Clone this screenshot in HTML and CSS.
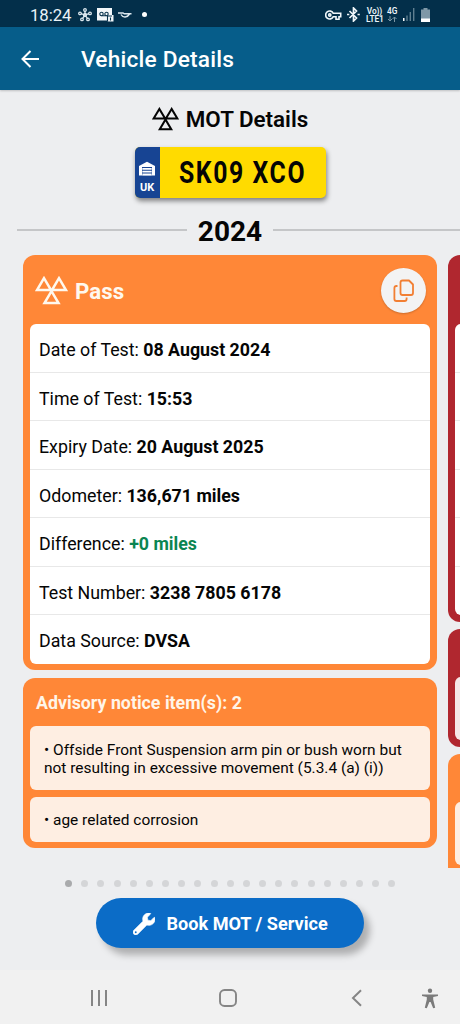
FILE: index.html
```html
<!DOCTYPE html>
<html lang="en">
<head>
<meta charset="utf-8">
<title>Vehicle Details</title>
<link rel="stylesheet" href="styles.css">
</head>
<body>
<svg width="0" height="0" class="defs">
  <symbol id="mot" viewBox="0 0 33 29"><path d="M9 2.200 2 14h14zM24 2.200 17 14h14zM16.500 15.200 9.500 27h14z" fill="none" stroke="currentColor" stroke-width="2.500"/></symbol>
</svg>
<div class="status">
  <span class="clock">18:24</span>
  <svg class="s-hub" width="14" height="14" viewBox="0 0 14 14" fill="none" stroke="#dce8ef" stroke-width="1.300"><path d="M7 7V3M7 7 3 5.600M7 7l4-1.400M7 7l-2.400 3.400M7 7l2.400 3.400"/><circle cx="7" cy="7" r="1.500"/><circle cx="7" cy="2" r="1.300"/><circle cx="2" cy="5.400" r="1.300"/><circle cx="12" cy="5.400" r="1.300"/><circle cx="4" cy="11.400" r="1.300"/><circle cx="10" cy="11.400" r="1.300"/></svg>
  <svg class="s-mail" width="17" height="14" viewBox="0 0 17 14"><path d="M0 0h15v7h1.500v6.500h-6V12.500H0z" fill="#f2f7fa"/><g fill="none" stroke="#07324c" stroke-width="1.100"><circle cx="4.500" cy="6" r="1.700"/><circle cx="9.500" cy="6" r="1.700"/><path d="M4.500 7.700h5M10.500 8v5.500M10.500 8H15M13.500 9.500v3"/></g></svg>
  <svg class="s-swoosh" width="14" height="9" viewBox="0 0 14 9"><path d="M0 3h5l1.200.8h7.300M3 4.500c2 3.500 6 3.500 8.500-.5" fill="none" stroke="#dce8ef" stroke-width="1.500"/></svg>
  <i class="s-dot"></i>
  <span class="spacer"></span>
  <svg class="s-key" width="17" height="12" viewBox="0 0 17 12" fill="none" stroke="#f0f6fa" stroke-width="1.600"><path d="M8.300 4.300A4 4 0 1 0 8.300 7.700H11v2.500h3V7.700h1.700V4.300z"/><circle cx="4.800" cy="6" r="1.100"/></svg>
  <svg class="s-bt" width="13" height="15" viewBox="0 0 13 15" fill="none" stroke="#f0f6fa" stroke-width="1.700"><path d="m2.500 4 7 7-3 3V1l3 3-7 7M0 7.500h2.300M10.500 7.500h2.300"/></svg>
  <span class="volte">Vo))<br>LTE1</span>
  <span class="net">4G<svg width="10" height="6" viewBox="0 0 10 6" fill="none" stroke="#7c96a5" stroke-width="1"><path d="M3 0v5M1 3l2 2 2-2M7.500 6V1M5.500 3l2-2 2 2"/></svg></span>
  <svg class="s-sig" width="12" height="13" viewBox="0 0 12 13" fill="#5f7e90"><path d="M0 10h1.500v3H0z" fill="#fff"/><path d="M3.300 7.500h1.400V13H3.300zM6.600 4H8v9H6.600zM10 0h1.400v13H10z"/></svg>
  <svg class="s-bat" width="9" height="14" viewBox="0 0 9 14"><path d="M2.500 0h4v1.500H9V14H0V1.500h2.500z" fill="#7f98a7"/><path d="M0 10.500h9V14H0z" fill="#fff"/></svg>
</div>
<header class="appbar">
  <svg width="20" height="20" viewBox="0 0 20 20" fill="none" stroke="#fff" stroke-width="2"><path d="M19 10H2.500M10.500 2l-8 8 8 8"/></svg>
  <h1>Vehicle Details</h1>
</header>
<main>
  <div class="heading"><svg width="27" height="24"><use href="#mot"/></svg><h2>MOT Details</h2></div>
  <div class="plate">
    <div class="band">
      <svg width="18" height="15" viewBox="0 0 18 15"><path d="M1 14.500V5L9 .8 17 5v9.500" fill="#fff"/><path d="M4 6h10v8.500H4z" fill="#174493"/><path d="M4.300 7h9.400v1.800H4.300zM4.300 9.700h9.400v1.800H4.300zM4.300 12.400h9.400v2.100H4.300z" fill="#fff"/></svg>
      <span>UK</span>
    </div>
    <div class="reg"><span>SK09 XCO</span></div>
  </div>
  <div class="year"><i></i><b>2024</b><i></i></div>
  <div class="carousel">
    <section class="slide">
      <article class="card orange result">
        <div class="card-top">
          <svg width="33" height="29"><use href="#mot"/></svg><h3>Pass</h3>
          <span class="copy"><svg width="22" height="24" viewBox="0 0 22 24" fill="none" stroke="#f27f33" stroke-width="1.800" stroke-linejoin="round"><path d="M9.500 1.500H16l4 4V14q0 2-2 2H9.500q-2 0-2-2V3.500q0-2 2-2z"/><path d="M4.500 7H3.400q-2 0-2 2v11q0 2 2 2h8.200q2 0 2-2v-1.500"/></svg></span>
        </div>
        <ul class="rows">
          <li>Date of Test: <b>08 August 2024</b></li>
          <li>Time of Test: <b>15:53</b></li>
          <li>Expiry Date: <b>20 August 2025</b></li>
          <li>Odometer: <b>136,671 miles</b></li>
          <li>Difference: <b class="green">+0 miles</b></li>
          <li>Test Number: <b>3238 7805 6178</b></li>
          <li>Data Source: <b>DVSA</b></li>
        </ul>
      </article>
      <article class="card orange notices">
        <h4>Advisory notice item(s): 2</h4>
        <p class="two">• Offside Front Suspension arm pin or bush worn but<br>not resulting in excessive movement (5.3.4 (a) (i))</p>
        <p>• age related corrosion</p>
      </article>
    </section>
    <section class="slide next">
      <article class="card red result"><div class="card-top"></div><ul class="rows"><li></li><li></li><li></li><li></li><li></li><li></li></ul></article>
      <article class="card red notices"><h4></h4><p class="two pink"></p></article>
      <article class="card orange notices"><h4></h4><p class="two"></p><p class="two"></p></article>
    </section>
  </div>
  <div class="dots"><i class="on"></i><i></i><i></i><i></i><i></i><i></i><i></i><i></i><i></i><i></i><i></i><i></i><i></i><i></i><i></i><i></i><i></i><i></i><i></i><i></i><i></i></div>
  <div class="book">
    <svg width="22" height="22" viewBox="0 0 512 512"><path fill="#fff" stroke="#fff" stroke-width="14" fill-rule="evenodd" d="M507.700 109.100c-2.200-9-13.500-12.100-20.100-5.500l-74.400 74.400-67.900-11.300L334 98.900l74.400-74.400c6.600-6.600 3.400-17.900-5.700-20.200-47.400-11.700-99.600.9-136.600 37.900-39.600 39.600-50.500 97.100-34.100 147.200L18.700 402.800c-25 25-25 65.500 0 90.500s65.500 25 90.500 0l213.200-213.200c50.100 16.700 107.500 5.700 147.400-34.200 37.100-37.100 49.700-89.300 37.900-136.800z"/><circle cx="64" cy="448" r="22" fill="#0b6cc7"/></svg>
    <span>Book MOT / Service</span>
  </div>
</main>
<nav>
  <svg width="18" height="18" viewBox="0 0 18 18" stroke="#858585" stroke-width="2"><path d="M2 1v16M9 1v16M16 1v16"/></svg>
  <svg width="18" height="18" viewBox="0 0 18 18" fill="none" stroke="#858585" stroke-width="1.900"><rect x="1" y="1" width="16" height="16" rx="4.500"/></svg>
  <svg width="11" height="18" viewBox="0 0 11 18" fill="none" stroke="#858585" stroke-width="2"><path d="M10 1.200 2 9l8 7.800"/></svg>
  <svg width="16" height="21" viewBox="0 0 16 21" fill="#7b7b7b"><circle cx="8" cy="2.700" r="2.200"/><path d="M0 6.500h16v1.600l-4.800.8v2.600l2 8.200-2 .6L8.600 14H7.400l-2.600 6.300-2-.6 2-8.200V8.900L0 8.100z"/></svg>
</nav>
</body>
</html>
```
FILE: styles.css
```css
* { box-sizing: border-box; margin: 0; padding: 0; }
body { width: 460px; height: 1024px; overflow: hidden; display: flex; flex-direction: column; background: #edeef0; font-family: Roboto, "Liberation Sans", sans-serif; color: #050505; }
svg { flex: none; display: block; }
.defs { position: absolute; }

.status { height: 27px; flex: none; display: flex; align-items: center; background: #032f4a; padding: 2px 30px 0; color: #eaf3f8; }
.clock { font-size: 16.800px; width: 48px; letter-spacing: -.1px; }
.s-mail { margin-left: 5px; }
.s-swoosh { margin-left: 4px; }
.s-dot { width: 5px; height: 5px; border-radius: 50%; background: #fff; margin-left: 10px; }
.spacer { flex: 1; }
.s-bt { margin-left: 5px; }
.volte, .net { font-size: 8.300px; line-height: 8px; font-weight: 600; text-align: center; }
.volte { margin-left: 6px; width: 17px; white-space: nowrap; letter-spacing: -.1px; }
.net { margin-left: 4px; width: 10px; }
.net svg { margin-top: 1px; }
.s-sig { margin-left: 6px; }
.s-bat { margin-left: 6px; }

.appbar { height: 63px; flex: none; display: flex; align-items: center; gap: 41px; padding: 1px 20px 0; background: #065d8a; color: #fff; box-shadow: 0 1px 2px #0003; }
h1 { font-size: 22.700px; font-weight: 500; letter-spacing: .2px; }

main { height: 880px; flex: none; display: flex; flex-direction: column; }
.heading { height: 57px; flex: none; display: flex; justify-content: center; align-items: center; gap: 7px; padding-top: 1px; }
h2 { font-size: 22.400px; font-weight: 600; }
.plate { width: 191px; height: 51px; flex: none; margin-left: 134.500px; display: flex; border-radius: 5px; overflow: hidden; background: #ffdb00; box-shadow: 1px 3px 5px #0007; }
.band { width: 25px; background: #174493; color: #fff; display: flex; flex-direction: column; align-items: center; padding-top: 14px; gap: 5px; font-size: 11px; line-height: 13px; font-weight: 700; }
.reg { flex: 1; display: flex; align-items: center; justify-content: center; font-size: 31px; font-weight: 700; white-space: nowrap; }
.reg span { transform: scaleX(.8); letter-spacing: 2px; }
.year { height: 57px; flex: none; display: flex; align-items: center; padding: 9px 0 0 17px; }
.year i { height: 2px; background: #c5c6c8; width: 170px; margin-bottom: 3px; }
.year i:last-child { flex: 1; }
.year b { width: 86px; text-align: center; font-size: 28px; }

.carousel { height: 613px; flex: none; overflow: hidden; display: flex; gap: 11px; padding-left: 23px; }
.slide { width: 413.500px; flex: none; display: flex; flex-direction: column; gap: 8px; }
.card { border-radius: 12px; padding: 0 6.500px 6.500px 7px; flex: none; }
.orange { background: #ff8737; }
.red { background: #b0272f; }
.card-top { height: 69px; display: flex; align-items: center; padding: 2px 4px 0 5px; color: #fff8ee; }
h3 { font-size: 22.300px; margin-left: 7px; flex: 1; padding-top: 1px; }
.copy { width: 45px; height: 45px; border-radius: 50%; background: #f3f3f3; display: flex; align-items: center; justify-content: center; box-shadow: 0 1px 2px #0003; }
.rows { list-style: none; background: #fff; border-radius: 6px; overflow: hidden; }
.rows li { height: 48.500px; padding: 1px 9px 0; line-height: 50px; font-size: 17.800px; border-bottom: 1px solid #e8e8e8; white-space: nowrap; }
.rows li:last-child { border: 0; }
.green { color: #0b8552; }
h4 { height: 48px; line-height: 50px; padding-left: 6px; font-size: 17.800px; color: #fff5e8; }
.notices { display: flex; flex-direction: column; }
.notices p { background: #feeee2; border-radius: 6px; font-size: 15.450px; line-height: 18.500px; padding: 14.500px 14px 0; height: 45px; white-space: nowrap; }
.notices p.two { height: 63.500px; }
.notices p + p { margin-top: 7px; }
.notices .pink { background: #f6e7e8; }
.next { gap: 7px; }

.dots { height: 30px; flex: none; display: flex; align-items: center; gap: 9.180px; padding-left: 65px; }
.dots i { width: 7px; height: 7px; border-radius: 50%; background: #d4d5d7; }
.dots .on { background: #a9aaac; }
.book { width: 268px; height: 50px; flex: none; margin-left: 96px; border-radius: 25px; background: #0b6cc7; color: #fff; display: flex; align-items: center; gap: 11.500px; padding: 1px 0 0 37px; font-size: 18.100px; font-weight: 700; box-shadow: 6px 7px 7px #0004; }

nav { height: 54px; flex: none; background: #f1f1f1; display: flex; align-items: center; padding: 2px 22px 0 90px; }
nav svg:nth-child(2) { margin-left: 111px; }
nav svg:nth-child(3) { margin-left: 114px; }
nav svg:nth-child(4) { margin-left: 60px; }
```
